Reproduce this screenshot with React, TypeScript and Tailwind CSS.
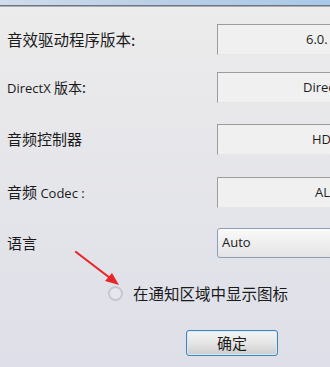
import React from "react";

const cjk = { fontFamily: '"Noto Sans CJK SC", "Noto Sans", sans-serif' };
const lat = { fontFamily: '"Open Sans", "Noto Sans CJK SC", sans-serif' };

function Field({ text, pl }: { text: string; pl: string }) {
  return (
    <div className="h-[31px] w-[200px] shrink-0 border-t border-l border-[#9c9c9c] border-b border-b-[#e6e6e6] bg-[#f0f0f0] flex items-center">
      <span className={`${pl} text-[13px] text-[#1e1e1e] whitespace-nowrap`} style={lat}>
        {text}
      </span>
    </div>
  );
}

export default function App() {
  return (
    <div className="relative w-[330px] h-[367px] overflow-hidden bg-gradient-to-b from-[#ececec] to-[#dedfe8] text-[#1a1a1a]">
      <div className="h-[5px] bg-gradient-to-r from-[#cfdcec] via-[#b9cfe6] to-[#a9c9e9]" />
      <div className="h-px bg-[#6e7580]" />
      <div className="h-px bg-[#a9adb4]" />

      <div className="flex flex-col pl-[7px] w-[600px]">
        <div className="mt-[17px] flex items-center">
          <div className="w-[210px] shrink-0 whitespace-nowrap text-[15.5px]" style={cjk}>音效驱动程序版本:</div>
          <Field text="6.0." pl="pl-[88px]" />
        </div>
        <div className="mt-[17px] flex items-center">
          <div className="w-[210px] shrink-0 whitespace-nowrap text-[13px]" style={lat}>
            DirectX <span className="text-[14px]" style={cjk}>版本:</span>
          </div>
          <Field text="DirectX 11" pl="pl-[85px]" />
        </div>
        <div className="mt-[21px] flex items-center">
          <div className="w-[210px] shrink-0 whitespace-nowrap text-[15px]" style={cjk}>音频控制器</div>
          <Field text="HD Audio" pl="pl-[94px]" />
        </div>
        <div className="mt-[22px] flex items-center">
          <div className="w-[210px] shrink-0 whitespace-nowrap text-[15px]" style={cjk}>
            音频 <span className="text-[13px]" style={lat}>Codec :</span>
          </div>
          <Field text="ALC887" pl="pl-[97px]" />
        </div>
        <div className="mt-[20px] flex items-center">
          <div className="w-[210px] shrink-0 whitespace-nowrap text-[15px]" style={cjk}>语言</div>
          <div className="h-[30px] w-[200px] shrink-0 rounded-[3px] border border-[#8c9fb5] bg-gradient-to-b from-[#fafafa] to-[#e4e4e6] flex items-center pl-[4px]">
            <span className="text-[13px]" style={lat}>Auto</span>
          </div>
        </div>

        <div className="mt-[24px] flex items-center pl-[101px]">
          <div className="w-[15px] h-[15px] shrink-0 rounded-full border-[2px] border-[#c4c7d2] bg-[#e6e7ee]" />
          <span className="ml-[10px] whitespace-nowrap text-[15.5px]" style={cjk}>在通知区域中显示图标</span>
        </div>

        <div className="mt-[25px] flex pl-[179px]">
          <div className="w-[92px] h-[26px] shrink-0 rounded-[3px] border border-[#3e86b6] bg-gradient-to-b from-[#f4f4f4] via-[#e6e6e6] to-[#cdcdcd] shadow-[inset_0_0_0_1px_#d6e9f5] flex items-center justify-center">
            <span className="text-[15px]" style={cjk}>确定</span>
          </div>
        </div>
      </div>

      <svg className="absolute left-0 top-0 pointer-events-none" width="330" height="367">
        <line x1="76" y1="252" x2="110" y2="278" stroke="#e8262a" strokeWidth="2.2" strokeLinecap="round" />
        <polygon points="119,285 105,281 112,273" fill="#e8262a" />
      </svg>
    </div>
  );
}
